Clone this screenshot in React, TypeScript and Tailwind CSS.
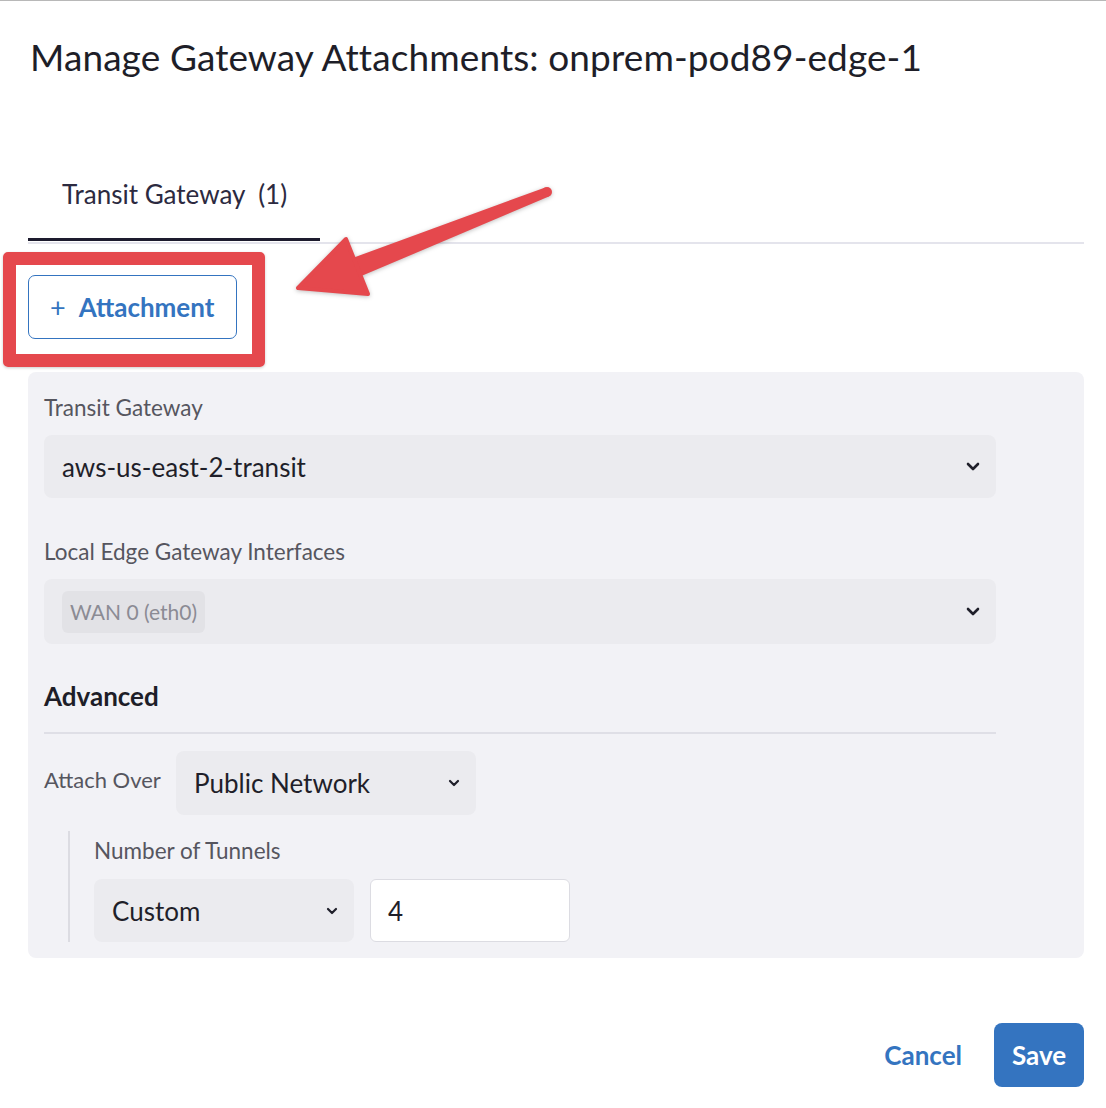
import React from "react";

const font = { fontFamily: "Lato, 'Open Sans', sans-serif" };

function Chevron() {
  return (
    <svg width="14" height="9" viewBox="0 0 14 9" fill="none">
      <path d="M2 2 L7 7 L12 2" stroke="#1f1f2a" strokeWidth="2.6" strokeLinecap="round" strokeLinejoin="round" />
    </svg>
  );
}

function SmallChevron() {
  return (
    <svg width="12" height="8" viewBox="0 0 12 8" fill="none">
      <path d="M2 2 L6 6 L10 2" stroke="#1f1f2a" strokeWidth="2.2" strokeLinecap="round" strokeLinejoin="round" />
    </svg>
  );
}

export default function App() {
  return (
    <div
      className="relative w-[1106px] h-[1108px] bg-white border-t border-[#b8b8b8] overflow-hidden"
      style={font}
    >
      <div className="flex flex-col pl-[28px] pr-[22px]">
        {/* Title */}
        <h1 className="mt-[32px] pl-[2px] text-[37px] leading-[48px] text-[#1e1e28] font-normal tracking-[0.1px]">
          Manage Gateway Attachments: onprem-pod89-edge-1
        </h1>

        {/* Tabs */}
        <div className="mt-[70px] flex border-b-2 border-[#e4e4ec]">
          <div className="w-[292px] h-[90px] flex items-center pl-[34px] border-b-[3px] border-[#1d1b2e] mb-[1px]">
            <span className="text-[26px] leading-[32px] text-[#2c2a40] -mt-[2px]">
              Transit Gateway&nbsp;&nbsp;(1)
            </span>
          </div>
        </div>

        {/* Attachment button */}
        <div className="mt-[31px] flex">
          <button className="h-[64px] w-[209px] rounded-[7px] border-[1.5px] border-[#3474c0] bg-white flex items-center pl-[21px] text-[#3474c0]">
            <span className="text-[27px] font-normal leading-none mr-[13px] -mt-[2px]">+</span>
            <span className="text-[26px] leading-[32px] font-bold">Attachment</span>
          </button>
        </div>

        {/* Panel */}
        <div className="mt-[33px] rounded-[8px] bg-[#f2f2f6] pl-[16px] pt-[22px] pb-[16px] pr-[88px] flex flex-col">
          <label className="text-[22.5px] leading-[28px] text-[#56565f]">Transit Gateway</label>
          <div className="mt-[13px] h-[63px] rounded-[8px] bg-[#ebebef] flex items-center justify-between pl-[18px] pr-[16px]">
            <span className="text-[26px] leading-[32px] text-[#1f1f2a]">aws-us-east-2-transit</span>
            <Chevron />
          </div>

          <label className="mt-[40px] text-[22.5px] leading-[28px] text-[#56565f]">Local Edge Gateway Interfaces</label>
          <div className="mt-[13px] h-[65px] rounded-[8px] bg-[#ebebef] flex items-center justify-between pl-[18px] pr-[16px]">
            <span className="h-[42px] px-[8px] rounded-[6px] bg-[#e2e2e6] flex items-center text-[21px] text-[#8b8b94]">
              WAN 0 (eth0)
            </span>
            <Chevron />
          </div>

          <div className="mt-[36px] text-[26px] leading-[32px] font-bold text-[#1e1e28]">Advanced</div>
          <div className="mt-[20px] h-[2px] bg-[#dfdfe6]" />

          <div className="mt-[17px] flex items-center">
            <span className="text-[22px] leading-[28px] text-[#56565f] w-[132px] -mt-[6px]">Attach Over</span>
            <div className="h-[64px] w-[300px] rounded-[8px] bg-[#ebebef] flex items-center justify-between pl-[18px] pr-[16px]">
              <span className="text-[26px] leading-[32px] text-[#1f1f2a]">Public Network</span>
              <SmallChevron />
            </div>
          </div>

          <div className="mt-[16px] ml-[24px] border-l-2 border-[#dcdce2] pl-[24px] flex flex-col">
            <label className="mt-[6px] text-[22.5px] leading-[28px] text-[#56565f]">Number of Tunnels</label>
            <div className="mt-[14px] flex gap-[16px]">
              <div className="h-[63px] w-[260px] rounded-[8px] bg-[#ebebef] flex items-center justify-between pl-[18px] pr-[16px]">
                <span className="text-[26px] leading-[32px] text-[#1f1f2a]">Custom</span>
                <SmallChevron />
              </div>
              <div className="h-[63px] w-[200px] rounded-[6px] bg-white border-[1.5px] border-[#dcdce2] flex items-center pl-[17px]">
                <span className="text-[26px] leading-[32px] text-[#1f1f2a]">4</span>
              </div>
            </div>
          </div>
        </div>

        {/* Footer */}
        <div className="mt-[65px] flex justify-end items-center gap-[32px]">
          <button className="text-[26px] leading-[32px] font-bold text-[#3474c0]">Cancel</button>
          <button className="h-[64px] w-[90px] rounded-[8px] bg-[#3474c0] text-white text-[26px] leading-[32px] font-bold">
            Save
          </button>
        </div>
      </div>

      {/* Annotation: red box */}
      <div className="absolute left-[3px] top-[251px] w-[262px] h-[115px] border-[13px] border-[#e5484d] rounded-[5px] shadow-[0_1px_3px_rgba(0,0,0,0.2)] pointer-events-none" />

      {/* Annotation: arrow */}
      <svg
        className="absolute left-0 top-0 pointer-events-none"
        width="1106"
        height="400"
        viewBox="0 0 1106 400"
        style={{ filter: "drop-shadow(0 1px 2px rgba(0,0,0,0.25))" }}
      >
        <polygon points="545.2,186.4 548.8,195.6 360.7,275.3 353.3,256.7" fill="#e5484d" />
        <circle cx="547" cy="191" r="5" fill="#e5484d" />
        <polygon
          points="346,238 298,287 368,293"
          fill="#e5484d"
          stroke="#e5484d"
          strokeWidth="4"
          strokeLinejoin="round"
        />
      </svg>
    </div>
  );
}
